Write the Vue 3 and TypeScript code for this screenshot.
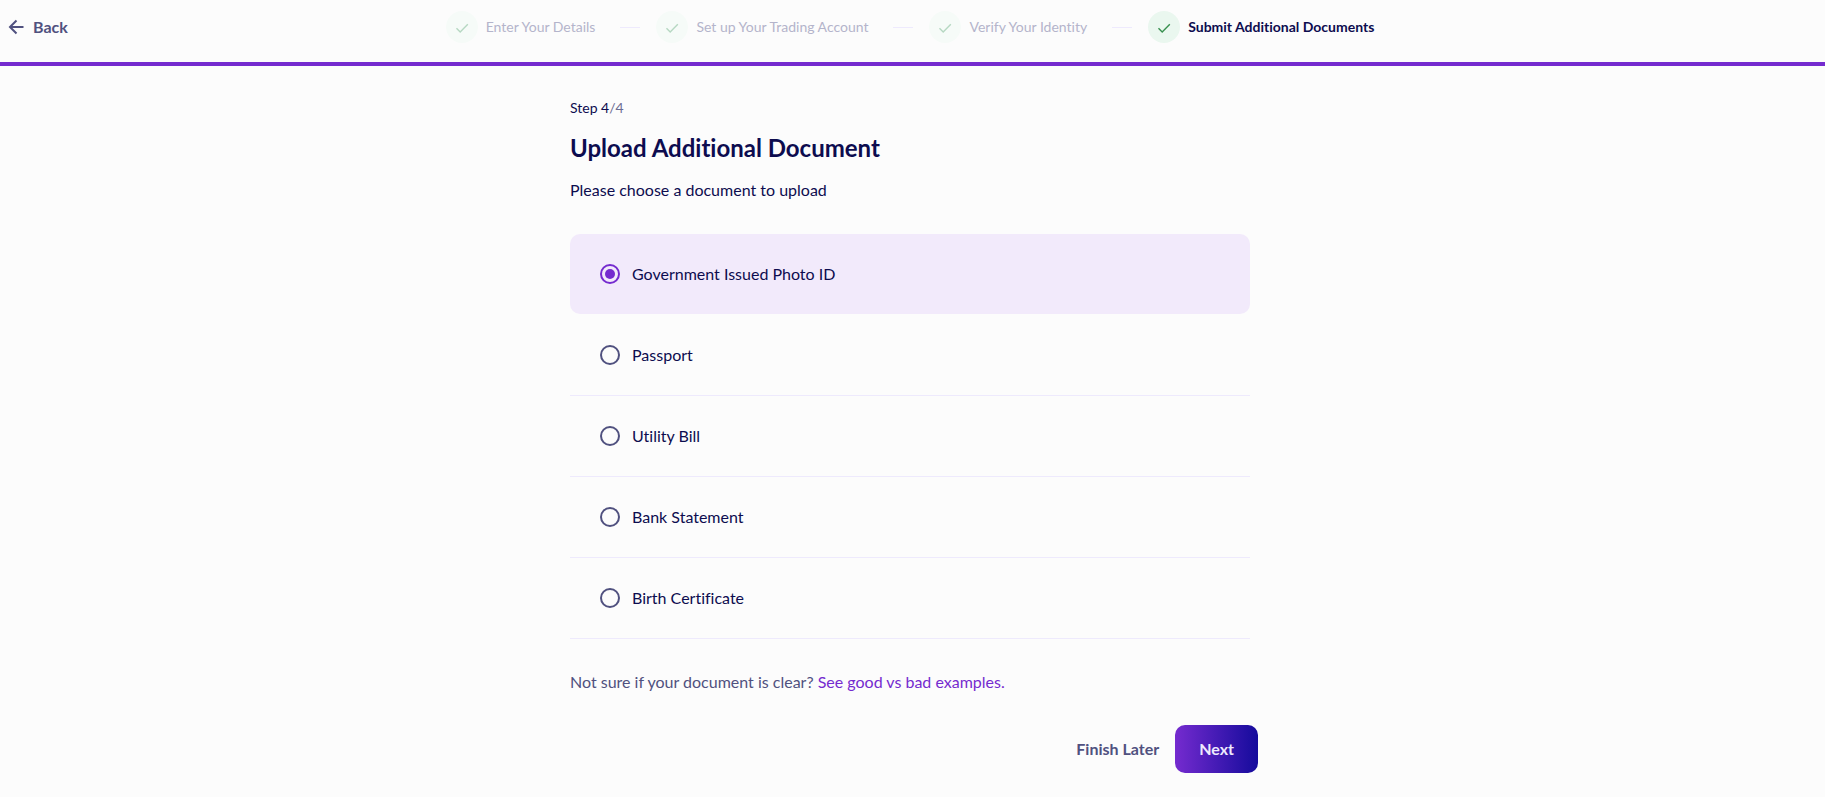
<script setup lang="ts">
import { ref } from 'vue'

interface Step {
  label: string
  current: boolean
}

const steps: Step[] = [
  { label: 'Enter Your Details', current: false },
  { label: 'Set up Your Trading Account', current: false },
  { label: 'Verify Your Identity', current: false },
  { label: 'Submit Additional Documents', current: true },
]

const documents: string[] = [
  'Government Issued Photo ID',
  'Passport',
  'Utility Bill',
  'Bank Statement',
  'Birth Certificate',
]

const selected = ref<string>(documents[0])
</script>

<template>
  <div class="page">
    <header class="topbar">
      <button type="button" class="back">
        <svg class="back-icon" viewBox="0 0 16 16" aria-hidden="true">
          <path d="M15.500 8H2M8.500 1.500L2 8l6.500 6.500" />
        </svg>
        <span>Back</span>
      </button>
      <ol class="steps">
        <li
          v-for="step in steps"
          :key="step.label"
          class="step"
          :class="{ current: step.current }"
          :aria-current="step.current ? 'step' : undefined"
        >
          <span class="badge">
            <svg class="check" viewBox="0 0 16 16" aria-hidden="true">
              <path d="M2.500 9.200L6.200 13L13.800 5.200" />
            </svg>
          </span>
          <span class="step-label">{{ step.label }}</span>
        </li>
      </ol>
    </header>

    <main class="content">
      <p class="counter">Step 4<span class="muted">/4</span></p>
      <h1 class="title">Upload Additional Document</h1>
      <p id="prompt" class="prompt">Please choose a document to upload</p>

      <form @submit.prevent>
        <div class="options" role="radiogroup" aria-labelledby="prompt">
          <label
            v-for="doc in documents"
            :key="doc"
            class="option"
            :class="{ selected: selected === doc }"
          >
            <input v-model="selected" class="radio" type="radio" name="document" :value="doc" />
            <span>{{ doc }}</span>
          </label>
        </div>

        <p class="help">
          Not sure if your document is clear?
          <a href="#examples">See good vs bad examples.</a>
        </p>

        <div class="actions">
          <button type="button" class="later">Finish Later</button>
          <button type="submit" class="next">Next</button>
        </div>
      </form>
    </main>
  </div>
</template>

<style>
body {
  margin: 0;
  background: #fcfcfc;
}
</style>

<style scoped>
.page {
  box-sizing: border-box;
  min-height: 100vh;
  color: #0d0c4f;
  font-family: Lato, 'Liberation Sans', sans-serif;
  font-size: 16px;
  font-variant-ligatures: none;
  line-height: 24px;
}

.topbar {
  display: grid;
  grid-template-columns: 1fr auto 1fr;
  align-items: center;
  padding: 11px 5px 19px 0;
  border-bottom: 4px solid #752bcf;
}

button {
  border: 0;
  padding: 0;
  background: none;
  color: #50517f;
  font: inherit;
  font-weight: 700;
  cursor: pointer;
}

.back {
  display: flex;
  align-items: center;
  justify-self: start;
  gap: 9px;
  padding-left: 8px;
}

.back-icon {
  width: 16px;
  height: 16px;
  fill: none;
  stroke: currentColor;
  stroke-width: 2;
}

.steps {
  display: flex;
  margin: 0;
  padding: 0;
  list-style: none;
}

.step {
  display: flex;
  align-items: center;
  color: #b4b4cb;
  font-size: 14px;
}

.step + .step::before {
  width: 20px;
  height: 1px;
  margin: 0 16px 0 25px;
  background: #eeeafd;
  content: '';
}

.badge {
  display: flex;
  align-items: center;
  justify-content: center;
  width: 32px;
  height: 32px;
  margin-right: 8px;
  border-radius: 50%;
  background: #f6fbf8;
}

.check {
  width: 16px;
  height: 16px;
  fill: none;
  stroke: #b6d8c2;
  stroke-width: 1.4;
}

.current {
  color: #0d0c4f;
  font-weight: 700;
}

.current .badge {
  background: #eaf7ef;
}

.current .check {
  stroke: #38904f;
}

.content {
  max-width: 680px;
  margin: 0 auto;
  padding: 32px 5px 24px 0;
}

.counter,
.title,
.prompt,
.help {
  margin: 0;
}

.counter {
  font-size: 14px;
  line-height: 20px;
}

.muted {
  color: #6a6b92;
}

.title {
  margin-top: 12px;
  font-size: 24px;
  font-weight: 700;
  line-height: 36px;
}

.prompt {
  margin-top: 12px;
}

.options {
  margin-top: 32px;
}

.option {
  display: flex;
  align-items: center;
  gap: 12px;
  height: 80px;
  padding: 0 30px;
  border-bottom: 1px solid #eeeafd;
  cursor: pointer;
}

.option.selected {
  margin-bottom: 1px;
  border-bottom: 0;
  border-radius: 10px;
  background: #f2eafb;
}

.radio {
  display: grid;
  place-items: center;
  width: 20px;
  height: 20px;
  margin: 0;
  border: 2px solid #50517f;
  border-radius: 50%;
  appearance: none;
}

.radio:checked {
  border-color: #752bcf;
}

.radio:checked::before {
  width: 10px;
  height: 10px;
  border-radius: 50%;
  background: #752bcf;
  content: '';
}

.help {
  margin-top: 31px;
  color: #50517f;
}

.help a {
  color: #752bcf;
  text-decoration: none;
}

.actions {
  display: flex;
  align-items: center;
  justify-content: flex-end;
  gap: 16px;
  margin: 31px -8px 0 0;
}

.next {
  height: 48px;
  padding: 0 24px;
  border-radius: 10px;
  background: linear-gradient(90deg, #752bcf, #150b9c);
  color: #eeeafd;
}
</style>
